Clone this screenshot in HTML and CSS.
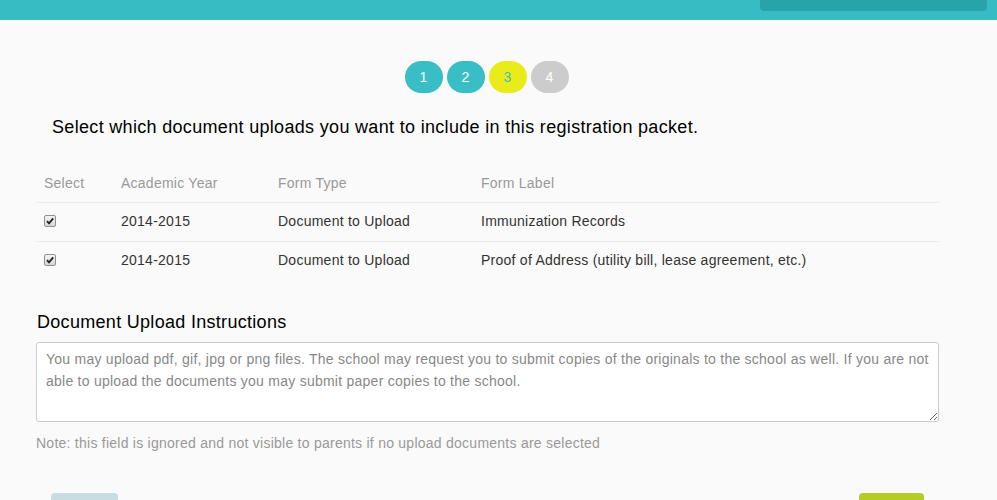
FILE: index.html
```html
<!DOCTYPE html>
<html>
<head>
<meta charset="utf-8">
<link rel="stylesheet" href="styles.css">
</head>
<body>
<header class="topbar"><div class="topbar-tab"></div></header>
<main class="page">
  <div class="steps">
    <span class="step step-done">1</span>
    <span class="step step-done">2</span>
    <span class="step step-current">3</span>
    <span class="step step-todo">4</span>
  </div>
  <h2 class="intro">Select which document uploads you want to include in this registration packet.</h2>
  <table class="docs">
    <thead>
      <tr><th class="c-sel">Select</th><th class="c-year">Academic Year</th><th class="c-type">Form Type</th><th>Form Label</th></tr>
    </thead>
    <tbody>
      <tr><td class="c-sel"><span class="check"><svg viewBox="0 0 12 12" width="12" height="12"><path d="M3 6.2 L5 8.4 L9.2 3.4" fill="none" stroke="#222" stroke-width="1.8"/></svg></span></td><td>2014-2015</td><td>Document to Upload</td><td>Immunization Records</td></tr>
      <tr><td class="c-sel"><span class="check"><svg viewBox="0 0 12 12" width="12" height="12"><path d="M3 6.2 L5 8.4 L9.2 3.4" fill="none" stroke="#222" stroke-width="1.8"/></svg></span></td><td>2014-2015</td><td>Document to Upload</td><td>Proof of Address (utility bill, lease agreement, etc.)</td></tr>
    </tbody>
  </table>
  <h3 class="section-title">Document Upload Instructions</h3>
  <textarea class="instructions">You may upload pdf, gif, jpg or png files. The school may request you to submit copies of the originals to the school as well. If you are not able to upload the documents you may submit paper copies to the school.</textarea>
  <p class="note">Note: this field is ignored and not visible to parents if no upload documents are selected</p>
  <div class="actions">
    <span class="btn btn-back"></span>
    <span class="btn btn-next"></span>
  </div>
</main>
</body>
</html>
```
FILE: styles.css
```css
html, body {
  margin: 0;
  padding: 0;
  background: #fafafa;
  font-family: "Liberation Sans", Arial, sans-serif;
  color: #333;
  overflow: hidden;
}
.topbar {
  height: 20px;
  background: #38bcc4;
  display: flex;
  justify-content: flex-end;
  padding-right: 10px;
}
.topbar-tab {
  width: 227px;
  height: 11px;
  background: #26a4aa;
  border-radius: 0 0 4px 4px;
}
.page {
  width: 903px;
  margin-left: 36px;
  padding-top: 41px;
}
.steps {
  display: flex;
  justify-content: center;
  gap: 4px;
  padding-right: 2px;
}
.step {
  width: 38px;
  height: 32px;
  border-radius: 16px;
  display: flex;
  align-items: center;
  justify-content: center;
  font-size: 14px;
  color: #fff;
}
.step-done { background: #39bec6; }
.step-current { background: #e9ec18; color: #39bec6; }
.step-todo { background: #cccccc; }
.intro {
  margin: 22px 0 0 16px;
  font-size: 18px;
  font-weight: normal;
  color: #000;
  line-height: 24px;
  letter-spacing: 0.32px;
}
.docs {
  width: 100%;
  border-collapse: collapse;
  margin-top: 25px;
  font-size: 14px;
  letter-spacing: 0.25px;
}
.docs th {
  text-align: left;
  font-weight: normal;
  color: #999;
  padding: 0 8px 10px;
  height: 28px;
  vertical-align: bottom;
  line-height: 18px;
}
.docs td {
  padding: 0 8px 2px;
  height: 36px;
  border-top: 1px solid #ececec;
  line-height: 18px;
  vertical-align: middle;
}
.docs .c-sel { width: 61px; }
.docs .c-year { width: 141px; }
.docs .c-type { width: 187px; }
.check {
  display: block;
  box-sizing: border-box;
  width: 12px;
  height: 12px;
  border: 1px solid #8f8f8f;
  border-radius: 2px;
  background: linear-gradient(#f4f4f4, #d6d6d6);
  position: relative;
}
.check svg {
  position: absolute;
  left: -1px;
  top: -1px;
}
.section-title {
  margin: 30px 0 0 1px;
  font-size: 18px;
  font-weight: normal;
  color: #000;
  line-height: 24px;
  letter-spacing: 0.3px;
}
.instructions {
  display: block;
  box-sizing: border-box;
  width: 903px;
  height: 80px;
  margin-top: 8px;
  padding: 5px 9px;
  border: 1px solid #ccc;
  border-radius: 3px;
  background: #fff;
  font-family: "Liberation Sans", Arial, sans-serif;
  font-size: 14px;
  line-height: 22px;
  color: #888;
  letter-spacing: 0.25px;
  resize: vertical;
}
.note {
  margin: 11px 0 0;
  font-size: 14px;
  color: #999;
  line-height: 20px;
  letter-spacing: 0.25px;
}
.actions {
  display: flex;
  justify-content: space-between;
  padding: 0 15px 0 15px;
  margin-top: 40px;
}
.btn {
  display: block;
  height: 30px;
  border-radius: 4px;
}
.btn-back { width: 67px; background: #c8dde2; }
.btn-next { width: 65px; background: #b5cc25; }
```
